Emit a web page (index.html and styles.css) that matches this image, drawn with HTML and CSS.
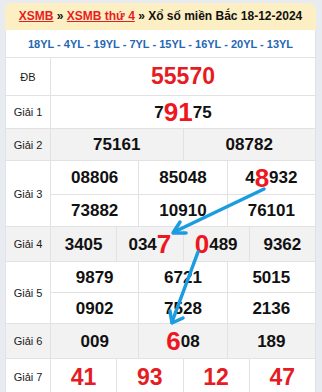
FILE: index.html
```html
<!DOCTYPE html>
<html lang="vi">
<head>
<meta charset="utf-8">
<title>XSMB 18-12-2024</title>
<link rel="stylesheet" href="styles.css">
</head>
<body>
<div class="page">
  <div class="title"><a href="#">XSMB</a> » <a href="#">XSMB thứ 4</a> » Xổ số miền Bắc 18-12-2024</div>
  <div class="table">
    <div class="codes">18YL - 4YL - 19YL - 7YL - 15YL - 16YL - 20YL - 13YL</div>

    <div class="row r-db">
      <div class="label">ĐB</div>
      <div class="cells c1"><div class="cell"><span class="big">55570</span></div></div>
    </div>

    <div class="row r-g1">
      <div class="label">Giải 1</div>
      <div class="cells c1"><div class="cell">7<span class="hl">91</span>75</div></div>
    </div>

    <div class="row alt r-g2">
      <div class="label">Giải 2</div>
      <div class="cells c2"><div class="cell">75161</div><div class="cell">08782</div></div>
    </div>

    <div class="row r-g3">
      <div class="label">Giải 3</div>
      <div class="cells c3">
        <div class="cell">08806</div><div class="cell">85048</div><div class="cell">4<span class="hl">8</span>932</div>
        <div class="cell">73882</div><div class="cell">10910</div><div class="cell">76101</div>
      </div>
    </div>

    <div class="row alt r-g4">
      <div class="label">Giải 4</div>
      <div class="cells c4">
        <div class="cell">3405</div><div class="cell">034<span class="hl">7</span></div><div class="cell"><span class="hl">0</span>489</div><div class="cell">9362</div>
      </div>
    </div>

    <div class="row r-g5">
      <div class="label">Giải 5</div>
      <div class="cells c3">
        <div class="cell">9879</div><div class="cell">6721</div><div class="cell">5015</div>
        <div class="cell">0902</div><div class="cell">7528</div><div class="cell">2136</div>
      </div>
    </div>

    <div class="row alt r-g6">
      <div class="label">Giải 6</div>
      <div class="cells c3">
        <div class="cell">009</div><div class="cell"><span class="hl">6</span>08</div><div class="cell">189</div>
      </div>
    </div>

    <div class="row r-g7">
      <div class="label">Giải 7</div>
      <div class="cells c4">
        <div class="cell"><span class="big">41</span></div><div class="cell"><span class="big">93</span></div><div class="cell"><span class="big">12</span></div><div class="cell"><span class="big">47</span></div>
      </div>
    </div>
  </div>

  <svg class="arrows" width="322" height="392" viewBox="0 0 322 392" aria-hidden="true">
    <g fill="none" stroke="#1b9be0" stroke-width="3.5" stroke-linecap="round" stroke-linejoin="round">
      <path d="M264 189 L174 232"/>
      <path d="M180 222 L173 233 L186 233"/>
      <path d="M198 252 L172 322"/>
      <path d="M170 311 L172 323 L183 318"/>
    </g>
  </svg>
</div>
</body>
</html>
```

FILE: styles.css
```css
html, body {
  margin: 0;
  padding: 0;
  background: #e8ebf0;
}

body {
  font-family: "Liberation Sans", Arial, "Noto Sans", sans-serif;
  color: #111;
}

.page {
  position: relative;
  width: 322px;
  height: 392px;
  padding: 3px 6px 0 5px;
  box-sizing: border-box;
  overflow: hidden;
}

.title {
  height: 27px;
  line-height: 27px;
  background: #fcefc3;
  border-radius: 7px 7px 0 0;
  text-align: center;
  font-size: 12px;
  font-weight: bold;
  color: #111;
  white-space: nowrap;
}

.title a {
  color: #e41d25;
  text-decoration: underline;
}

.table {
  background: #fff;
  border-left: 1px solid #dfe2e6;
  border-right: 1px solid #dfe2e6;
}

.codes {
  height: 27px;
  line-height: 28px;
  border-bottom: 1px solid #e2e2e2;
  text-align: center;
  font-size: 11px;
  font-weight: bold;
  color: #2467b3;
  white-space: nowrap;
}

.row {
  display: flex;
  border-bottom: 1px solid #e2e2e2;
  background: #fff;
}

.label {
  width: 44px;
  flex: none;
  border-right: 1px solid #e2e2e2;
  display: flex;
  align-items: center;
  justify-content: center;
  font-size: 11px;
  color: #1a1a1a;
}

.cells {
  flex: 1;
  display: grid;
  gap: 1px;
  background: #e2e2e2;
}

.c1 { grid-template-columns: 1fr; }
.c2 { grid-template-columns: repeat(2, 1fr); }
.c3 { grid-template-columns: repeat(3, 1fr); }
.c4 { grid-template-columns: repeat(4, 1fr); }

.cell {
  background: #fff;
  display: flex;
  align-items: center;
  justify-content: center;
  font-size: 17px;
  font-weight: bold;
  color: #111;
  line-height: 1;
  white-space: nowrap;
}

.alt .label,
.alt .cell {
  background: #f2f2f2;
}

.r-db .cells { grid-template-rows: 37px; }
.r-g1 .cells { grid-template-rows: 32px; }
.r-g2 .cells { grid-template-rows: 31px; }
.r-g3 .cells { grid-template-rows: 33px 31px; }
.r-g4 .cells { grid-template-rows: 34px; }
.r-g5 .cells { grid-template-rows: 30px 30px; }
.r-g6 .cells { grid-template-rows: 34px; }
.r-g7 .cells { grid-template-rows: 36px; }

.big {
  font-size: 23px;
  color: #e51c24;
}

.hl {
  font-size: 26px;
  color: #ee1620;
}

.arrows {
  position: absolute;
  top: 0;
  left: 0;
  pointer-events: none;
}
```
